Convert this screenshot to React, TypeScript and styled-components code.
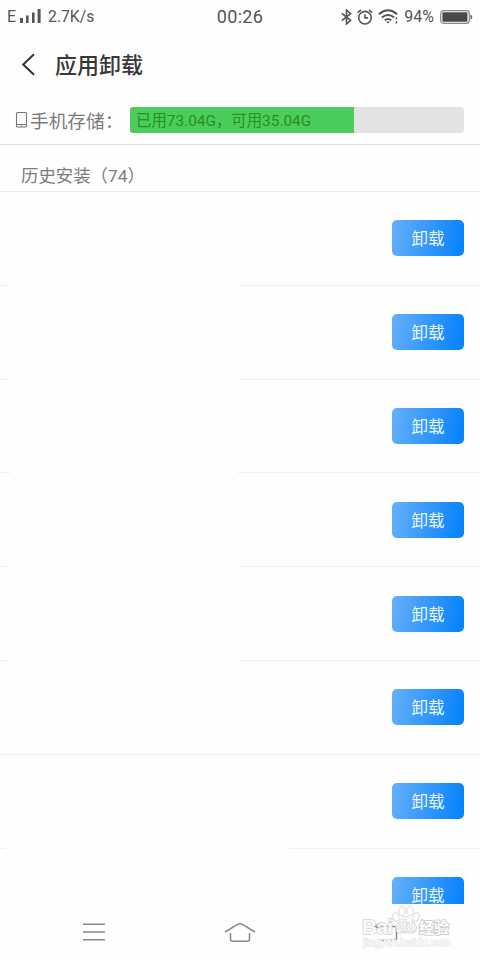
import React from "react";
import styled, { createGlobalStyle } from "styled-components";

const GlobalStyle = createGlobalStyle`
  * { box-sizing: border-box; }
  body {
    margin: 0;
    background: #fefefe;
    font-family: Roboto, "Noto Sans CJK SC", sans-serif;
  }
`;

const Screen = styled.div`
  position: relative;
  display: flex;
  flex-direction: column;
  width: 480px;
  height: 960px;
  overflow: hidden;
  background: #fefefe;
`;

const StatusBar = styled.div`
  display: grid;
  grid-template-columns: 1fr auto 1fr;
  align-items: center;
  height: 33px;
  padding: 0 7px;
  color: #555;
`;

const StatusGroup = styled.div<{ $end?: boolean }>`
  display: flex;
  align-items: center;
  justify-content: ${(p) => (p.$end ? "flex-end" : "flex-start")};
  svg { display: block; flex: none; }
`;

const StatusIcons = styled.div`
  display: flex;
  align-items: center;
  gap: 5px;
`;

const StatusText = styled.span<{ $size: number; $left?: number; $right?: number }>`
  font-size: ${(p) => p.$size}px;
  line-height: 33px;
  margin-left: ${(p) => p.$left ?? 0}px;
  margin-right: ${(p) => p.$right ?? 0}px;
  white-space: nowrap;
`;

const Clock = styled(StatusText)`
  letter-spacing: 0.35px;
`;

const TitleBar = styled.header`
  display: flex;
  align-items: center;
  height: 63px;
  padding: 0 0 0 21px;
  gap: 19px;
`;

const Title = styled.h1`
  margin: 2px 0 0;
  font-size: 22px;
  font-weight: 500;
  line-height: 30px;
  color: #383838;
`;

const StorageRow = styled.section`
  display: flex;
  align-items: center;
  height: 49px;
  padding: 0 16px 0 15px;
  border-bottom: 1px solid #dedede;
`;

const StorageLabel = styled.span`
  width: 100px;
  margin-left: 2px;
  padding-top: 4px;
  font-size: 18.7px;
  line-height: 28px;
  color: #7c7c7c;
  white-space: nowrap;
`;

const Track = styled.div`
  width: 334px;
  height: 26px;
  border-radius: 3px;
  overflow: hidden;
  background: #e3e3e3;
`;

const Used = styled.div`
  height: 100%;
  padding-left: 6px;
  background: #4bcd5d;
  color: #289018;
  font-size: 15.4px;
  line-height: 29px;
  white-space: nowrap;
`;

const SectionTitle = styled.h2`
  height: 47px;
  margin: 0;
  padding-left: 21px;
  border-bottom: 1px solid #ededed;
  font-size: 17.4px;
  font-weight: 400;
  line-height: 62px;
  color: #7c7c7c;
`;

const AppList = styled.main`
  height: 712px;
  overflow: hidden;
`;

const AppRow = styled.div`
  display: flex;
  flex-direction: column;
  height: 93.8px;
`;

const RowBody = styled.div`
  display: flex;
  flex: 1;
  align-items: center;
  justify-content: flex-end;
  padding-right: 16px;
`;

const Divider = styled.div<{ $gapStart: number; $gapEnd: number }>`
  height: 1px;
  background: linear-gradient(
    to right,
    #f1f1f1 ${(p) => p.$gapStart}px,
    transparent ${(p) => p.$gapStart}px ${(p) => p.$gapEnd}px,
    #f1f1f1 ${(p) => p.$gapEnd}px
  );
`;

const UninstallButton = styled.button`
  width: 72px;
  height: 36px;
  padding: 3px 0 0;
  border: 0;
  border-radius: 5px;
  background: linear-gradient(100deg, #66b0fa 0%, #0a84fc 92%);
  color: #e6f7ff;
  font: 400 16.5px/33px Roboto, "Noto Sans CJK SC", sans-serif;
`;

const NavBar = styled.nav`
  display: flex;
  align-items: center;
  justify-content: space-between;
  height: 56px;
  padding: 0 82px;
`;

const Watermark = styled.div`
  position: absolute;
  left: 361px;
  top: 904px;
`;

const dividers = [
  [10, 238],
  [10, 238],
  [10, 238],
  [10, 238],
  [10, 238],
  [0, 0],
  [6, 289],
  [0, 0],
];

const SignalIcon = () => (
  <svg width="21" height="15" viewBox="0 0 21 15" fill="#555">
    <rect x="0" y="9" width="3" height="5" />
    <rect x="6" y="6.5" width="2.6" height="7.5" />
    <rect x="12" y="3.5" width="2.6" height="10.5" />
    <rect x="17.6" y="0" width="3" height="14" />
  </svg>
);

const BluetoothIcon = () => (
  <svg width="11" height="16" viewBox="0 0 11 16" fill="none" stroke="#555" strokeWidth="1.6">
    <path d="M.8 4.3 9.6 11.4 5.5 15V1l4.1 3.6L.8 11.7" />
  </svg>
);

const AlarmIcon = () => (
  <svg width="16" height="16" viewBox="0 0 16 16" fill="none" stroke="#555" strokeWidth="1.6">
    <circle cx="8" cy="8.7" r="6.3" />
    <path d="M8 5.2v3.7h3M.8 3.6 4 .9M15.2 3.6 12 .9" />
  </svg>
);

const WifiIcon = () => (
  <svg width="21" height="15" viewBox="0 0 21 15" fill="none" stroke="#555" strokeWidth="1.9">
    <path d="M.9 5.2Q10 -2.6 19.1 5.2M3.8 8.4q6.2-5 12.4 0M6.7 11.3q3.3-2.7 6.6 0" />
    <path d="M8 12.5h4l-2 2z" fill="#555" stroke="none" />
    <path d="M18.4 8.2v2.4M18.4 12.2v2.3" strokeWidth="1.4" />
  </svg>
);

const BatteryIcon = () => (
  <svg width="33" height="14" viewBox="0 0 33 14">
    <rect x=".7" y=".7" width="28.6" height="12.6" rx="3" fill="#fefefe" stroke="#858585" strokeWidth="1.2" />
    <rect x="2.4" y="2.3" width="25" height="9.4" rx="1" fill="#484848" />
    <path d="M30.5 4.5q1.8.5 1.8 2.5t-1.8 2.5z" fill="#666" />
  </svg>
);

const BackIcon = () => (
  <svg width="15" height="24" viewBox="0 0 15 24" fill="none" stroke="#333" strokeWidth="2">
    <path d="M13 1.200 2.200 11.500 13 21.800" />
  </svg>
);

const PhoneIcon = () => (
  <svg width="13" height="18" viewBox="0 0 13 18" fill="none" stroke="#777" strokeWidth="1.1">
    <rect x="1.5" y="1.5" width="10" height="14.5" rx="1" />
    <path d="M1.5 13.5h10M5.5 15h2" />
  </svg>
);

const MenuIcon = () => (
  <svg width="23" height="18" viewBox="0 0 23 18" stroke="#888" strokeWidth="1.5">
    <path d="M1 1.2h22M1 9h22M1 16.7h22" />
  </svg>
);

const HomeIcon = () => (
  <svg width="32" height="22" viewBox="0 0 32 22" fill="none" stroke="#888" strokeWidth="1.5">
    <path d="M1 11 14 3.1q2-1.3 4 0L31 11M6.5 12v6.3q0 2 2 2h15q2 0 2-2V12" />
  </svg>
);

const ReturnIcon = () => (
  <svg width="24" height="20" viewBox="0 0 24 20" fill="none" stroke="#888" strokeWidth="1.5">
    <path d="M6 1 1 4.500h19.500q2 0 2 2v10q0 2-2 2H4M1 4.500 6 7" />
  </svg>
);

const WatermarkLogo = () => (
  <svg width="100" height="52" viewBox="0 0 100 52">
    <g fill="#fefefe" fillOpacity=".6" stroke="#dadada" strokeWidth="1">
      <ellipse cx="35" cy="13" rx="3" ry="4.3" transform="rotate(-15 35 13)" />
      <ellipse cx="41" cy="7" rx="3.2" ry="4.5" />
      <ellipse cx="49" cy="7" rx="3.2" ry="4.5" />
      <ellipse cx="55" cy="13" rx="3" ry="4.3" transform="rotate(15 55 13)" />
      <path d="M45 12.5c4 0 5 4 8 6.5 5 4 2 11-3 10q-5-1-10 0c-5 1-8-6-3-10 3-2.500 4-6.500 8-6.500z" />
    </g>
    <g fontFamily="Liberation Sans, sans-serif" fontWeight="700" fill="#fefefe" fillOpacity=".8" stroke="#d4d4d4" strokeWidth="1.4" paintOrder="stroke">
      <text x="1" y="30" fontSize="21" textLength="31">Bai</text>
      <text x="37" y="27" fontSize="14" textLength="17">du</text>
    </g>
    <text x="58" y="29" fontFamily="Noto Sans CJK SC, sans-serif" fontWeight="700" fontSize="15" textLength="30" fill="#fefefe" stroke="#c8c8c8" strokeWidth="1.6" paintOrder="stroke">经验</text>
    <text x="2" y="42" fontFamily="Liberation Sans, sans-serif" fontSize="11" textLength="88" fill="#fefefe" stroke="#e3e3e3" strokeWidth="1.2" paintOrder="stroke">jingyan.baidu.com</text>
  </svg>
);

export default function App() {
  return (
    <>
      <GlobalStyle />
      <Screen>
        <StatusBar>
          <StatusGroup>
            <StatusText $size={16} $right={4}>E</StatusText>
            <SignalIcon />
            <StatusText $size={15.7} $left={7}>2.7K/s</StatusText>
          </StatusGroup>
          <Clock $size={18}>00:26</Clock>
          <StatusGroup $end>
            <StatusIcons>
              <BluetoothIcon />
              <AlarmIcon />
              <WifiIcon />
            </StatusIcons>
            <StatusText $size={16} $left={5} $right={6}>94%</StatusText>
            <BatteryIcon />
          </StatusGroup>
        </StatusBar>
        <TitleBar>
          <BackIcon />
          <Title>应用卸载</Title>
        </TitleBar>
        <StorageRow>
          <PhoneIcon />
          <StorageLabel>手机存储：</StorageLabel>
          <Track>
            <Used style={{ width: "67.1%" }}>已用73.04G，可用35.04G</Used>
          </Track>
        </StorageRow>
        <SectionTitle>历史安装（74）</SectionTitle>
        <AppList>
          {dividers.map(([start, end], i) => (
            <AppRow key={i}>
              <RowBody>
                <UninstallButton>卸载</UninstallButton>
              </RowBody>
              <Divider $gapStart={start} $gapEnd={end} />
            </AppRow>
          ))}
        </AppList>
        <NavBar>
          <MenuIcon />
          <HomeIcon />
          <ReturnIcon />
        </NavBar>
        <Watermark>
          <WatermarkLogo />
        </Watermark>
      </Screen>
    </>
  );
}
